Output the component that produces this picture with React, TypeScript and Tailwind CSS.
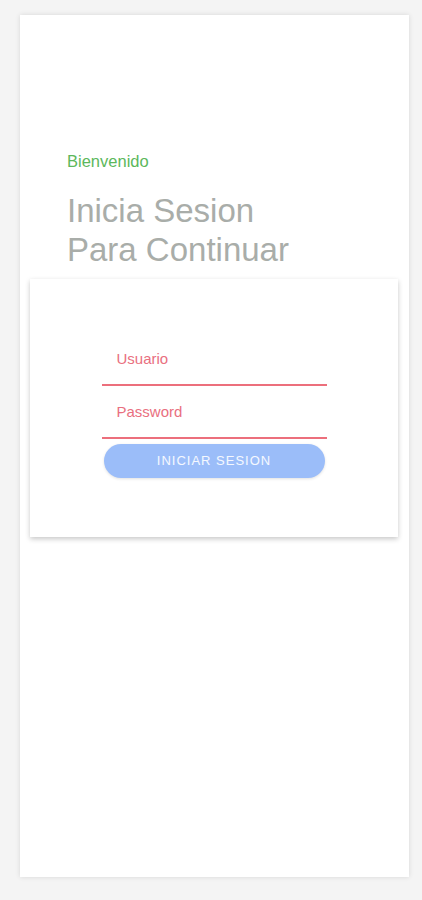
import React from "react";

export default function App() {
  return (
    <div
      className="min-h-[900px] w-full bg-[#f4f4f4] pt-[15px] pl-[20px]"
      style={{ fontFamily: '"Liberation Sans", Arial, sans-serif' }}
    >
      <div className="flex h-[862px] w-[389px] flex-col bg-white px-[10px] pt-[137px] shadow-[0_0_5px_rgba(0,0,0,0.12)]">
        <div className="pl-[37px]">
          <p className="text-[16.5px] leading-[18px] text-[#5cb85c]">Bienvenido</p>
          <h1 className="mt-[21px] text-[33px] font-normal leading-[39px] text-[#a9ada9]">
            Inicia Sesion
            <br />
            Para Continuar
          </h1>
        </div>
        <div className="mt-[10px] flex h-[258px] w-[368px] flex-col items-center bg-white pt-[54px] shadow-[0_2px_5px_rgba(0,0,0,0.22)]">
          <div className="flex w-[225px] flex-col">
            <input
              type="text"
              placeholder="Usuario"
              className="h-[53px] w-full border-b-2 border-[#ec6f7c] bg-transparent pl-[15px] text-[15px] text-[#e96f80] outline-none placeholder:text-[#e96f80]"
            />
            <input
              type="password"
              placeholder="Password"
              className="h-[53px] w-full border-b-2 border-[#ec6f7c] bg-transparent pl-[15px] text-[15px] text-[#e96f80] outline-none placeholder:text-[#e96f80]"
            />
            <button
              type="button"
              className="mx-auto mt-[5px] h-[34px] w-[221px] rounded-full bg-[#9bbdf9] text-[13px] uppercase tracking-[1px] text-white/90 shadow-[0_1px_3px_rgba(0,0,0,0.12)]"
            >
              Iniciar Sesion
            </button>
          </div>
        </div>
      </div>
    </div>
  );
}
